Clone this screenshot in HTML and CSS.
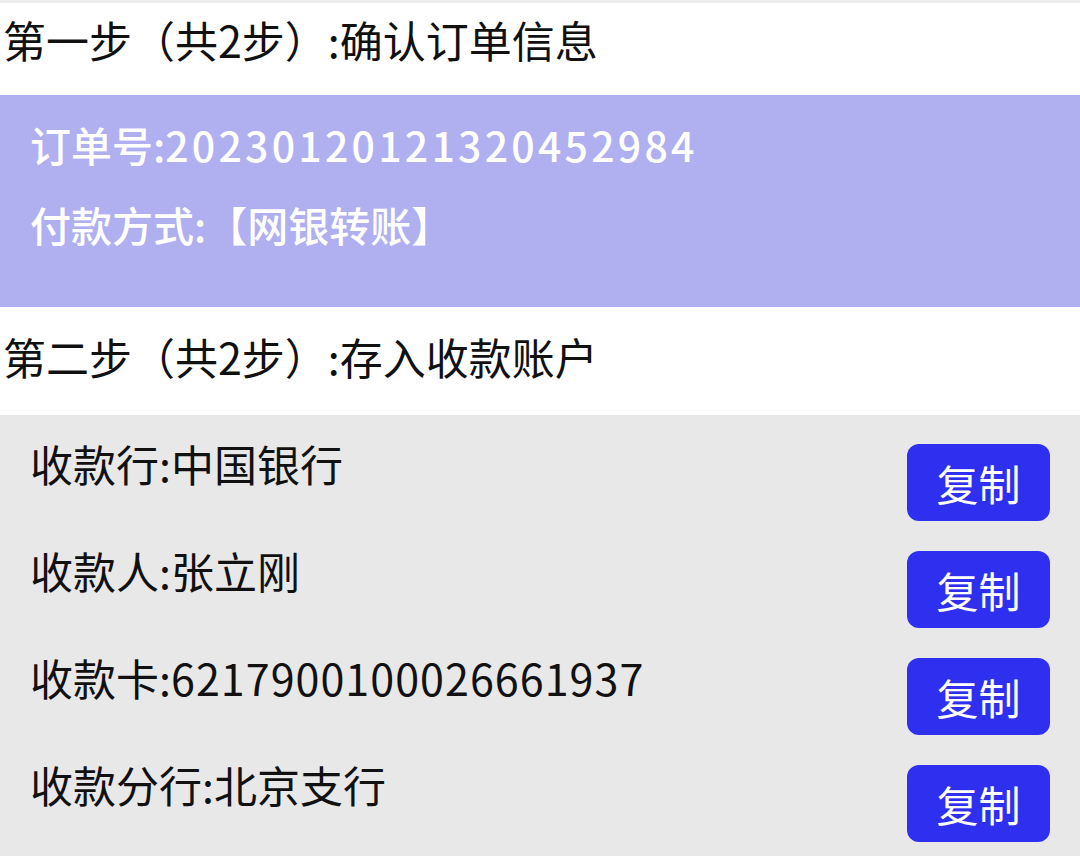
FILE: index.html
```html
<!DOCTYPE html>
<html>

<head>
  <meta charset="UTF-8" />
  <meta name="viewport" content="width=device-width, initial-scale=1.0">
  <title>订单支付</title>
  <link rel="stylesheet" href="styles.css">
</head>

<body>
  <div class="step-title step-one">第一步（共2步）:确认订单信息</div>

  <div class="order-info">
    <p>订单号:<span class="num">20230120121320452984</span></p>
    <p>付款方式:【网银转账】</p>
  </div>

  <div class="step-title step-two">第二步（共2步）:存入收款账户</div>

  <div class="account">
    <div class="row">
      <span class="label">收款行:中国银行</span>
      <button class="btn">复制</button>
    </div>
    <div class="row">
      <span class="label">收款人:张立刚</span>
      <button class="btn">复制</button>
    </div>
    <div class="row">
      <span class="label">收款卡:<span class="num">6217900100026661937</span></span>
      <button class="btn">复制</button>
    </div>
    <div class="row">
      <span class="label">收款分行:北京支行</span>
      <button class="btn">复制</button>
    </div>
  </div>
</body>

</html>
```

FILE: styles.css
```css
* {
  margin: 0;
  padding: 0;
  box-sizing: border-box;
  font-family: "Noto Sans CJK SC", sans-serif;
}

body {
  background-color: #fff;
  color: #111;
  border-top: 3px solid #ececec;
}

.step-title {
  display: flex;
  align-items: center;
  padding-left: 3px;
  font-size: 43px;
  color: #111;
}

.step-one {
  height: 92px;
  padding-bottom: 20px;
}

.step-two {
  height: 108px;
  padding-bottom: 10px;
}

/* order summary block */
.order-info {
  background-color: #b0b0f0;
  color: #fff;
  padding: 9px 30px 43px;
  font-size: 41px;
  font-weight: 500;
}

.order-info p {
  line-height: 80px;
}

.order-info .num {
  letter-spacing: 3.25px;
}

/* receiving account */
.account {
  background-color: #e8e8e8;
  padding: 23px 30px 0;
  min-height: 441px;
}

.row {
  display: flex;
  justify-content: space-between;
  align-items: flex-start;
  height: 107px;
}

.label {
  font-size: 43px;
  line-height: 50px;
}

.label .num {
  letter-spacing: 1.05px;
}

.btn {
  width: 143px;
  height: 77px;
  margin-top: 6px;
  border: none;
  border-radius: 12px;
  background-color: #2f2ff0;
  color: #fff;
  font-size: 42px;
  cursor: pointer;
}
```
